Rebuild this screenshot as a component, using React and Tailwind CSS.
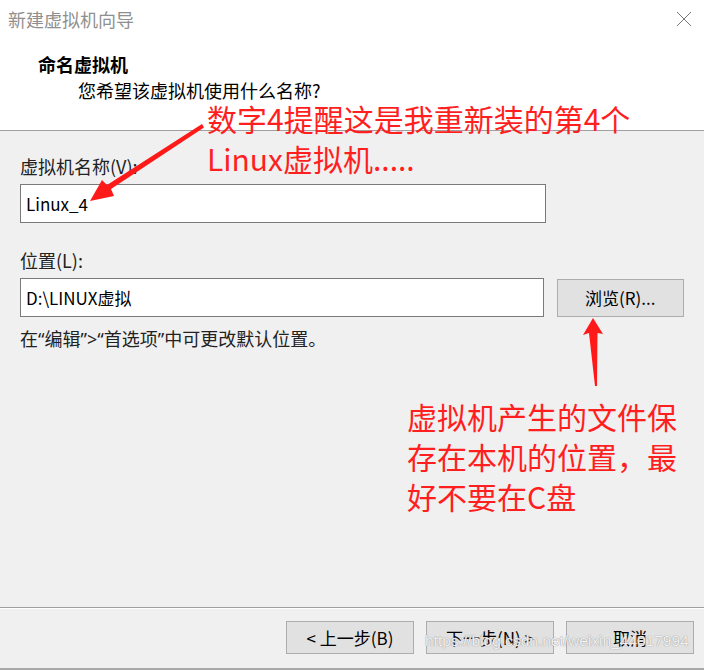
import React from "react";

const uiFont = {
  fontFamily: '"Noto Sans CJK SC", "Noto Sans", sans-serif',
};

const latin = { fontFamily: '"Noto Sans", "Liberation Sans", sans-serif' };

function Button({ children, className = "" }) {
  return (
    <div
      className={
        "flex h-[33px] w-[128px] items-center justify-center border border-[#adadad] bg-[#e1e1e1] text-[17px] text-black " +
        className
      }
    >
      {children}
    </div>
  );
}

export default function App() {
  return (
    <div
      className="relative flex h-[670px] w-[704px] flex-col overflow-hidden bg-[#f0f0f0]"
      style={uiFont}
    >
      {/* header */}
      <div className="relative h-[131px] shrink-0 border-b border-[#a0a0a0] bg-white">
        <div className="pl-[8px] pt-[6px] text-[18px] leading-[26px] text-[#8f8f8f]">
          新建虚拟机向导
        </div>
        <svg
          className="absolute right-[12px] top-[11px]"
          width="16"
          height="16"
          viewBox="0 0 16 16"
        >
          <path d="M1 1 L15 15 M15 1 L1 15" stroke="#777" strokeWidth="1" fill="none" />
        </svg>
        <div className="pl-[38px] pt-[21px] text-[18px] font-bold leading-[22px] text-black">
          命名虚拟机
        </div>
        <div className="pl-[78px] pt-[4px] text-[18px] leading-[22px] text-black">
          您希望该虚拟机使用什么名称?
        </div>
      </div>

      {/* body */}
      <div className="flex flex-1 flex-col px-[20px] pt-[24px]">
        <div className="text-[18px] leading-[22px] text-[#222]">虚拟机名称(V):</div>
        <div className="mt-[7px] flex h-[39px] w-[526px] items-center border border-[#7a7a7a] bg-white px-[5px] text-[17px] text-black">
          Linux_4
        </div>

        <div className="mt-[26px] text-[18px] leading-[22px] text-[#222]">位置(L):</div>
        <div className="mt-[7px] flex items-center gap-[13px]">
          <div className="flex h-[39px] w-[526px] items-center border border-[#7a7a7a] bg-white px-[5px] text-[17px] text-black">
            D:\LINUX虚拟
          </div>
          <Button className="h-[38px] w-[124px]">浏览(R)...</Button>
        </div>
        <div className="mt-[10px] text-[18px] leading-[22px] text-[#222]">
          在<span style={latin}>“</span>编辑<span style={latin}>”&gt;“</span>首选项
          <span style={latin}>”</span>中可更改默认位置。
        </div>
      </div>

      {/* footer */}
      <div className="h-[61px] shrink-0 border-t border-[#a0a0a0] shadow-[inset_0_1px_0_#ffffff]">
        <div className="flex justify-end gap-[12px] pr-[10px] pt-[13px]">
          <Button>&lt; 上一步(B)</Button>
          <Button>下一步(N) &gt;</Button>
          <Button>取消</Button>
        </div>
      </div>
      <div className="h-[2px] shrink-0 bg-[#a9a9a9]" />

      {/* red notes and arrows drawn over the dialog */}
      <svg className="pointer-events-none absolute left-0 top-0" width="704" height="670">
        <polygon
          points="202,124 204,127.5 111,189 114,196 90,201 102,180 107,185"
          fill="#ff1a1a"
        />
        <polygon
          points="593,318 603,334 597.5,333 597,386 595,386 589,333 583,335"
          fill="#ff1a1a"
        />
      </svg>
      <div className="pointer-events-none absolute left-[207px] top-[98px] text-[30px] leading-[40px] text-[#ff1f1f]">
        <div>数字4提醒这是我重新装的第4个</div>
        <div>Linux虚拟机.....</div>
      </div>
      <div className="pointer-events-none absolute left-[407px] top-[396px] w-[290px] text-[30px] leading-[40px] text-[#ff1f1f]">
        <div>虚拟机产生的文件保</div>
        <div>存在本机的位置，最</div>
        <div>好不要在C盘</div>
      </div>

      {/* watermark */}
      <div
        className="pointer-events-none absolute left-[425px] top-[631px] whitespace-nowrap text-[15.5px] leading-[20px] text-white/85 [text-shadow:0_0_1px_#9a9a9a,0_0_1px_#9a9a9a]"
        style={{ fontFamily: '"Liberation Sans", Arial, sans-serif' }}
      >
        https://blog.csdn.net/weixin_44017994
      </div>
    </div>
  );
}
